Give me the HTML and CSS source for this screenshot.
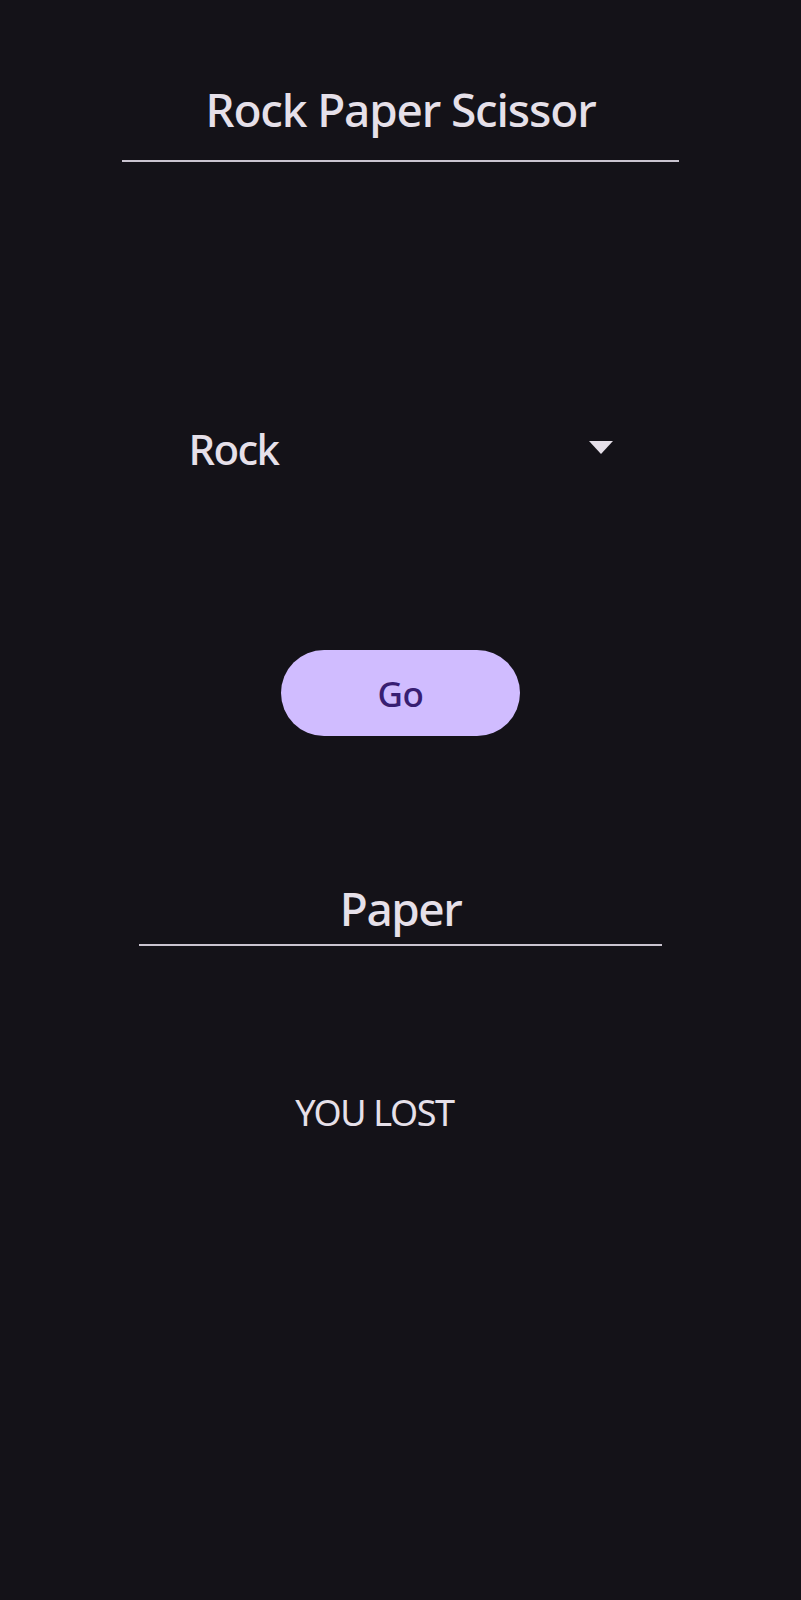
FILE: index.html
```html
<!DOCTYPE html>
<html lang="en">
<head>
<meta charset="utf-8">
<title>Rock Paper Scissor</title>
<link rel="stylesheet" href="styles.css">
</head>
<body>
<main class="screen">
  <h1 class="title">Rock Paper Scissor</h1>
  <div class="select">
    <span class="select-value">Rock</span>
    <svg class="select-arrow" width="24" height="13" viewBox="0 0 24 13" aria-hidden="true"><path d="M0 0 L24 0 L12 13 Z" fill="#e6e0e9"/></svg>
  </div>
  <button class="go">Go</button>
  <div class="choice">Paper</div>
  <div class="result">YOU LOST</div>
</main>
</body>
</html>
```

FILE: styles.css
```css
html, body {
  margin: 0;
  padding: 0;
  background: #141218;
}
body {
  min-height: 1600px;
  font-family: "Noto Sans", "Open Sans", sans-serif;
  color: #e6e0e9;
}
.screen {
  display: flex;
  flex-direction: column;
  align-items: center;
  padding-top: 79px;
}
.title {
  width: 557px;
  margin: 0;
  padding-bottom: 21px;
  border-bottom: 2px solid #cac4d0;
  font-size: 46px;
  font-weight: 500;
  letter-spacing: -1.15px;
  line-height: 60px;
  text-align: center;
}
.select {
  width: 424px;
  margin-top: 260px;
  display: flex;
  align-items: center;
  justify-content: space-between;
}
.select-value {
  font-size: 42px;
  font-weight: 500;
  letter-spacing: -1.6px;
  line-height: 54px;
}
.select-arrow {
  display: block;
  margin-top: -4px;
}
.go {
  margin-top: 174px;
  width: 239px;
  height: 86px;
  border: 0;
  border-radius: 43px;
  background: #d0bcff;
  color: #381e72;
  font-family: "Noto Sans", "Open Sans", sans-serif;
  font-size: 35px;
  font-weight: 500;
  letter-spacing: -0.5px;
  padding: 0;
}
.choice {
  width: 523px;
  margin-top: 142px;
  padding-bottom: 6px;
  border-bottom: 2px solid #cac4d0;
  font-size: 46px;
  font-weight: 500;
  letter-spacing: -1.5px;
  line-height: 60px;
  text-align: center;
}
.result {
  margin-top: 144px;
  margin-right: 52px;
  font-size: 36px;
  letter-spacing: -1.4px;
  line-height: 46px;
  color: #e6e0e9;
}
```
